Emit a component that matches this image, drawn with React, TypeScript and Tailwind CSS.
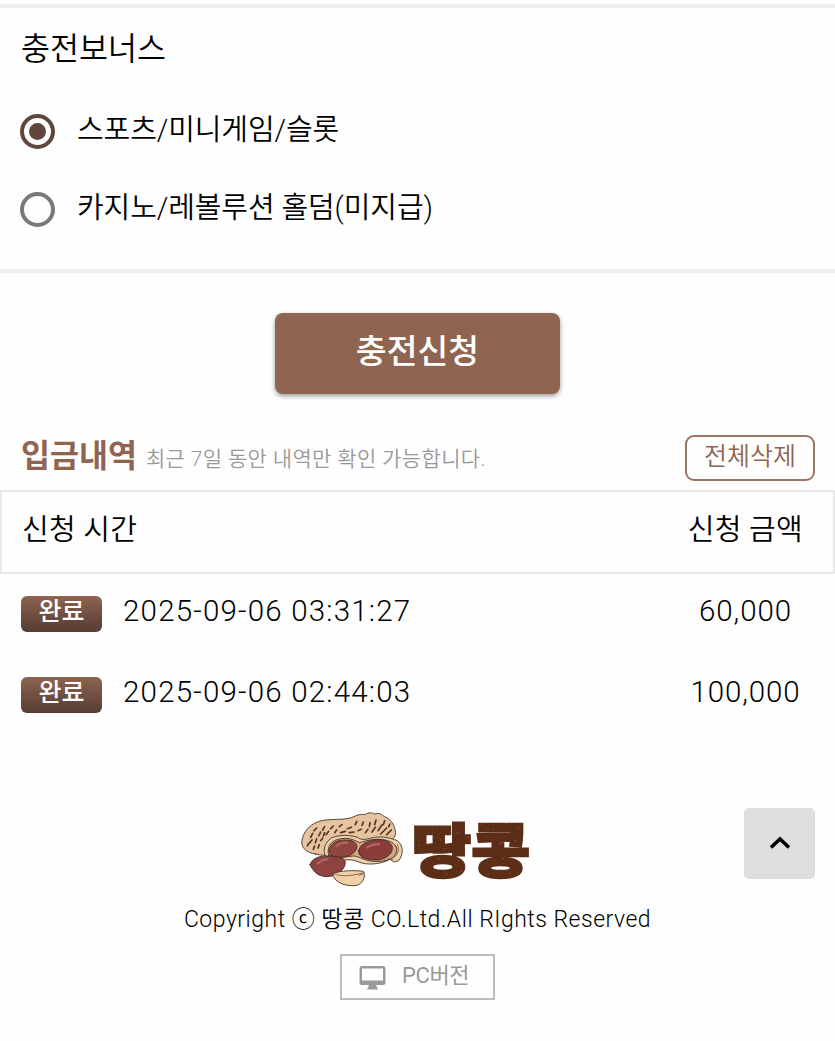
import React from 'react';

interface Deposit {
  time: string;
  amount: string;
}

const deposits: Deposit[] = [
  { time: '2025-09-06 03:31:27', amount: '60,000' },
  { time: '2025-09-06 02:44:03', amount: '100,000' },
];

const Radio: React.FC<{ checked?: boolean; children: React.ReactNode }> = ({ checked, children }) => (
  <label className="flex h-[78px] items-center pl-[19.5px]">
    <span
      className={
        checked
          ? 'flex h-[35px] w-[35px] items-center justify-center rounded-full border-4 border-[#5f473c]'
          : 'flex h-[35px] w-[35px] items-center justify-center rounded-full border-4 border-[#797979]'
      }
    >
      {checked && <span className="h-[17px] w-[17px] rounded-full bg-[#5f473c]" />}
    </span>
    <span className="ml-[22.5px] text-[29px] tracking-[-0.1px]">{children}</span>
  </label>
);

const shellMarks = [
  [62, 112, 68, 100], [72, 92, 80, 84], [86, 108, 92, 96], [98, 90, 104, 80], [108, 104, 116, 94],
  [122, 86, 130, 78], [134, 98, 140, 90], [148, 80, 156, 74], [152, 98, 166, 94], [172, 86, 184, 82],
  [178, 98, 192, 96], [196, 74, 200, 64], [204, 92, 214, 88], [216, 76, 220, 66], [226, 98, 234, 88],
  [238, 80, 240, 68], [246, 96, 256, 82], [254, 74, 258, 60], [264, 92, 276, 74], [272, 102, 290, 84],
  [280, 74, 284, 62], [290, 104, 304, 90], [58, 130, 66, 120], [76, 128, 80, 116], [92, 122, 98, 114],
  [52, 138, 56, 130], [70, 148, 74, 138], [84, 144, 88, 134], [100, 108, 104, 98], [296, 80, 300, 72],
];

const specks = [
  [398, 76], [441, 84], [385, 136], [417, 128], [452, 120], [462, 146], [504, 98], [534, 112],
  [574, 72], [610, 88], [650, 70], [684, 84], [676, 122], [700, 104], [630, 132], [690, 150],
  [398, 176], [388, 212], [448, 176], [506, 182], [514, 214], [470, 222], [572, 184], [594, 222],
  [640, 176], [660, 220], [702, 190], [612, 182],
];

const Logo: React.FC = () => (
  <svg className="h-[78px] w-[240px] overflow-visible" viewBox="24 30 720 234">
    <g stroke="#3a2822" strokeWidth="2.5" strokeLinejoin="round" strokeLinecap="round">
      <path
        fill="#e6c4a0"
        d="M76 162C48 158 32 142 36 120C40 98 56 76 82 66C112 54 148 62 180 54C196 50 206 40 224 44C238 36 246 38 254 42C266 36 276 44 284 50C304 58 312 74 316 92C320 108 310 118 296 124L130 164C108 168 92 166 76 162Z"
      />
      <path
        fill="#ecd0aa"
        d="M106 168C98 150 104 128 124 114C150 102 184 106 202 112C218 124 232 116 254 112C278 108 302 114 322 122C340 136 342 162 326 182L312 186L300 178C270 194 230 196 206 186C180 174 156 182 140 182Z"
      />
      <path
        fill="#d4ab80"
        d="M116 166C108 140 126 118 154 116C176 112 194 120 208 128C234 120 262 114 286 120C314 126 326 142 318 160C310 180 276 186 250 184C222 182 206 168 190 168C164 170 150 178 116 166Z"
      />
      <path fill="#924440" d="M118 152C120 130 142 118 168 120C190 120 204 130 200 144C196 162 172 172 148 172C128 172 116 166 118 152Z" />
      <path fill="#8b3d3c" d="M206 152C210 132 232 122 260 119C284 118 306 128 307 142C308 162 290 176 264 180C232 180 204 174 206 152Z" />
      <path fill="#8f4340" d="M60 194C66 174 90 166 116 168C144 168 164 174 166 186C166 210 140 230 108 230C82 228 70 214 60 194Z" />
      <path fill="#f0d0a8" d="M130 220C150 212 194 210 220 214C228 228 220 248 202 256C172 260 142 252 130 230Z" />
    </g>
    <g fill="none" stroke="#593426" strokeWidth="5" strokeLinecap="round">
      {shellMarks.map(([x1, y1, x2, y2]) => (
        <path key={`${x1}-${y1}`} d={`M${x1} ${y1}L${x2} ${y2}`} />
      ))}
      <path strokeWidth="2" d="M134 222C154 232 196 226 222 218M208 226L218 222M322 134C330 150 324 166 304 180" />
    </g>
    <g fill="none" stroke="#c47d76" strokeWidth="7" strokeLinecap="round" opacity=".6">
      <path d="M140 138Q154 126 172 128M232 142Q248 132 268 132M84 190Q96 178 112 178" />
    </g>
    <text
      x="367"
      y="216"
      fill="#5c2e17"
      stroke="#5c2e17"
      strokeWidth="7"
      fontSize="174"
      fontWeight="900"
      fontFamily="'Noto Sans CJK KR', sans-serif"
      textLength="353"
      lengthAdjust="spacingAndGlyphs"
    >
      땅콩
    </text>
    <g fill="#c9ada0">
      {specks.map(([x, y]) => (
        <circle key={`${x}-${y}`} cx={x} cy={y} r="1.4" />
      ))}
    </g>
  </svg>
);

export default function App() {
  return (
    <div className="relative flex h-[1041px] w-[835px] flex-col overflow-hidden bg-[#fefefe] pt-1 font-[Roboto,'Noto_Sans_CJK_KR',sans-serif] font-[350] whitespace-nowrap text-black">
      <section className="h-[269px] border-y-4 border-[#eeeeee]">
        <h2 className="flex h-[84px] items-center pl-[21px] text-[31.5px]">충전보너스</h2>
        <Radio checked>스포츠/미니게임/슬롯</Radio>
        <Radio>카지노/레볼루션 홀덤(미지급)</Radio>
      </section>

      <button className="mt-10 flex h-[81px] w-[285px] items-center justify-center self-center rounded-lg bg-[#8f6450] pb-0.5 text-[33.5px] font-medium text-white shadow-[0_2px_5px_rgba(0,0,0,0.4)]">
        충전신청
      </button>

      <div className="mt-[41px] flex h-[46px] items-center pr-5 pl-[21px]">
        <h3 className="-mt-[3px] text-[31.5px] font-bold text-[#8f6450]">입금내역</h3>
        <p className="mt-1 ml-[9px] text-[21px] tracking-[0.36px] text-[#999999]">최근 7일 동안 내역만 확인 가능합니다.</p>
        <button className="ml-auto flex h-[46px] w-[130px] items-center justify-center rounded-[9px] border-2 border-[#9c7563] pb-0.5 text-[25px] text-[#8f6450]">
          전체삭제
        </button>
      </div>

      <div className="mt-[9px] flex h-[84px] items-center justify-between border-2 border-[#e8e8e8] pr-[30px] pb-0.5 pl-5 text-[29px] tracking-[0.3px]">
        <span>신청 시간</span>
        <span>신청 금액</span>
      </div>
      {deposits.map((deposit) => (
        <div key={deposit.time} className="flex h-[81px] items-center pb-0.5 pl-[21px] text-[29px]">
          <span className="flex h-9 w-[81px] items-center justify-center rounded-md bg-linear-to-b from-[#8f6450] to-[#553c32] pb-[3px] text-[25px] font-medium text-white">
            완료
          </span>
          <span className="-mt-1 ml-[21px] text-[29.5px] tracking-[1.2px]">{deposit.time}</span>
          <span className="-mt-1 ml-auto w-[179px] text-center text-[29.5px] tracking-[0.9px]">{deposit.amount}</span>
        </div>
      ))}

      <footer className="flex flex-col items-center pt-[74px]">
        <Logo />
        <p className="mt-3 text-[23px] leading-[40px] tracking-[0.5px]">Copyright ⓒ 땅콩 CO.Ltd.All RIghts Reserved</p>
        <button className="mt-3.5 flex h-[46px] w-[155px] items-center border-2 border-[#bdbdbd] pl-[17px] text-[22px] font-normal text-[#999999]">
          <svg className="mt-px h-[26px] w-[27px]" viewBox="0 0 27 26" fill="#999999">
            <path
              fillRule="evenodd"
              d="M3 1H24Q26.500 1 26.500 3.500V17.500Q26.500 20 24 20H17L19 24.500H8L10 20H3Q.5 20 .5 17.500V3.500Q.5 1 3 1ZM3 3.500V15.500H24V3.500Z"
            />
          </svg>
          <span className="-mt-1 ml-4 tracking-[-0.4px]">PC버전</span>
        </button>
      </footer>

      <button className="absolute top-[808px] right-5 flex h-[71px] w-[71px] items-center justify-center rounded-[5px] bg-[#dedede] pb-0.5">
        <svg className="h-[13px] w-5" viewBox="0 0 20 13" fill="none" stroke="#000000" strokeWidth="3.5">
          <path d="M1 11.500L10 3L19 11.500" />
        </svg>
      </button>
    </div>
  );
}
